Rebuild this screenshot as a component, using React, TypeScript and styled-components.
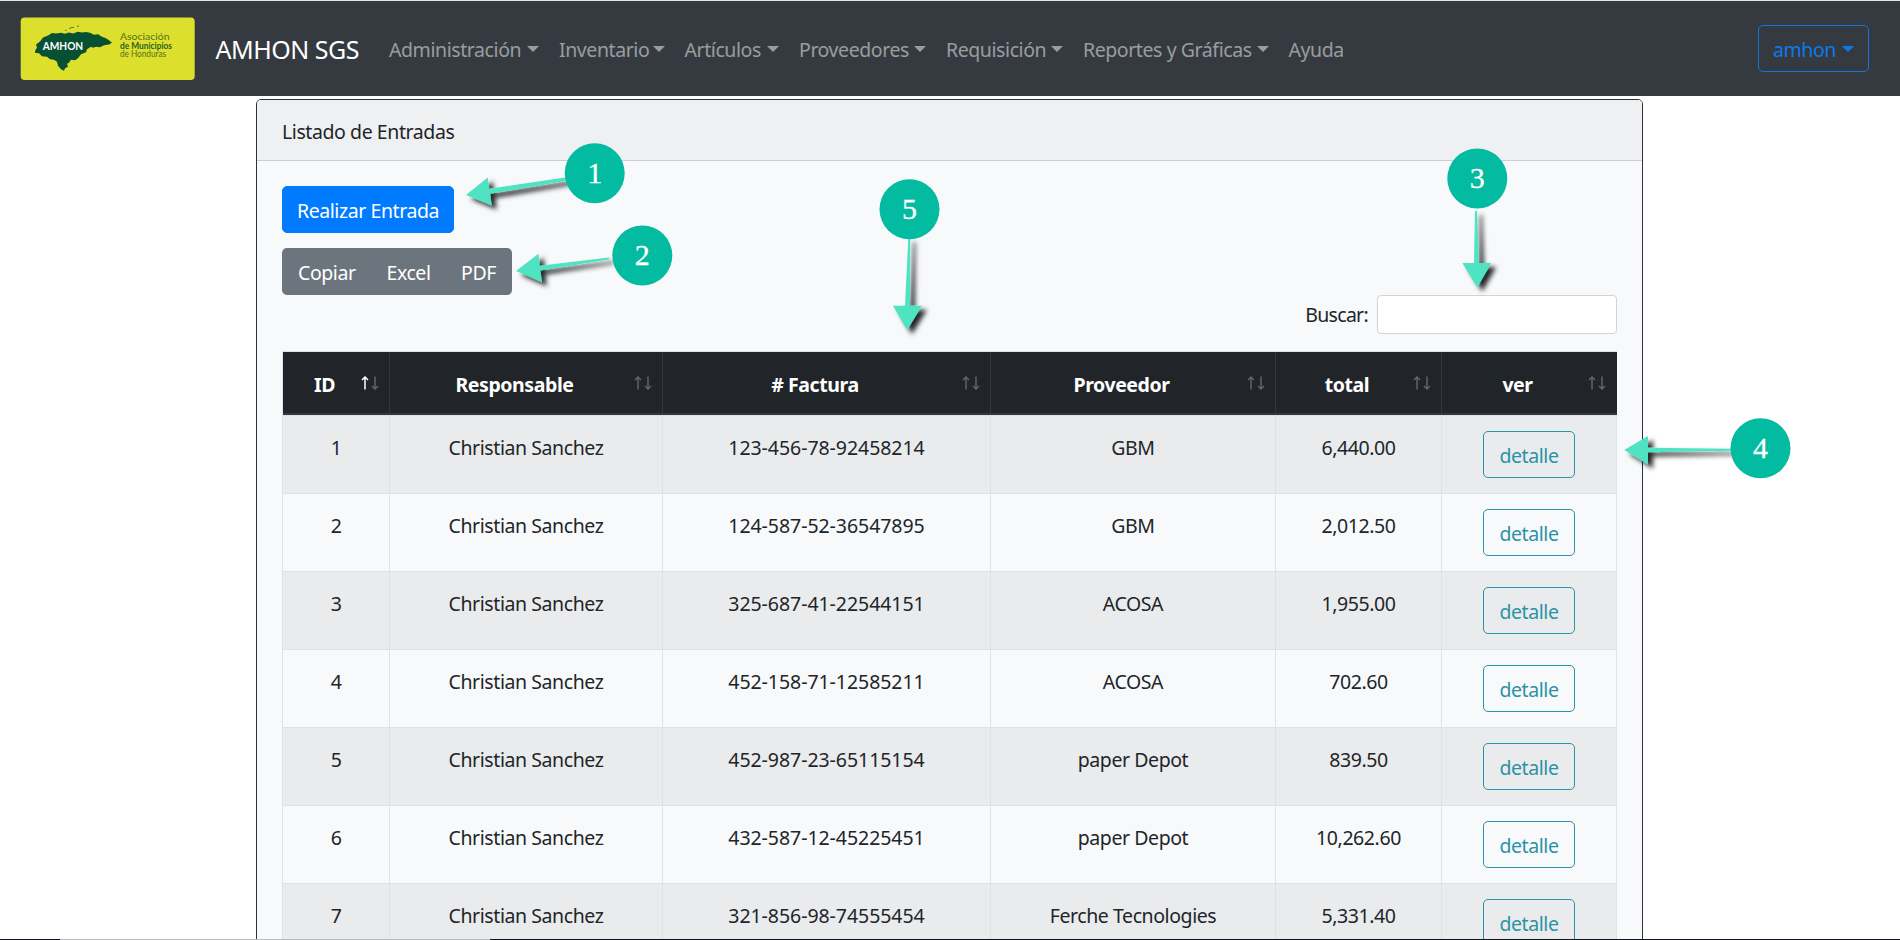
import React from 'react';
import styled, { createGlobalStyle } from 'styled-components';

const GlobalStyle = createGlobalStyle`
  * { box-sizing: border-box; }
  body {
    margin: 0;
    background: #fff;
    color: #212529;
    font-family: "Noto Sans", "Open Sans", sans-serif;
    font-size: 19.5px;
    line-height: 30px;
    letter-spacing: -0.42px;
    overflow: hidden;
  }
`;

const Page = styled.div`
  position: relative;
  display: flex;
  flex-direction: column;
  height: 940px;
  overflow: hidden;
`;

const Navbar = styled.nav`
  flex: none;
  display: flex;
  align-items: center;
  height: 96px;
  padding: 0 31px 0 20px;
  border-top: 1px solid #dfe7e7;
  background: #343a40;
`;

const Brand = styled.a`
  display: flex;
  align-items: center;
  width: 359px;
  color: #fff;
`;

const BrandName = styled.span`
  margin-left: 19.5px;
  padding-top: 1px;
  font-size: 25px;
  line-height: 38px;
  letter-spacing: -0.5px;
  white-space: nowrap;
`;

const NavList = styled.div`
  display: flex;
  flex: 1;
  padding-top: 3px;
`;

const NavItem = styled.a<{ $width: number }>`
  display: flex;
  align-items: center;
  justify-content: space-between;
  width: ${(p) => p.$width}px;
  padding: 0 10px;
  color: rgba(255, 255, 255, 0.5);
  white-space: nowrap;
`;

const Caret = styled.span`
  margin-bottom: 2px;
  border: 6px solid transparent;
  border-top-color: currentColor;
  border-bottom: 0;
`;

const Button = styled.button<{ $tone: 'primary' | 'outlinePrimary' | 'outlineInfo' }>`
  display: inline-flex;
  align-items: center;
  justify-content: center;
  gap: 6px;
  height: 47px;
  padding: 9px 0 6px;
  border: 1px solid;
  border-radius: 5px;
  font: inherit;
  line-height: 30px;
  letter-spacing: inherit;
  white-space: nowrap;
  ${(p) =>
    p.$tone === 'primary'
      ? 'width: 172px; background: #007bff; border-color: #007bff; color: #fff;'
      : p.$tone === 'outlinePrimary'
        ? 'width: 111px; background: transparent; border-color: #1774d8; color: #0f79ec;'
        : 'width: 92px; background: transparent; border-color: #2a93a5; color: #2a93a5;'}
`;

const Card = styled.section`
  flex: none;
  width: 1387px;
  margin: 3px 0 0 256px;
  border: 1px solid #2d3237;
  border-radius: 5px;
  background: #f8f9fb;
`;

const CardHeader = styled.header`
  height: 61px;
  padding: 17px 25px 0;
  border-bottom: 1px solid #ccced1;
  border-radius: 4px 4px 0 0;
  background: #eff0f2;
`;

const CardBody = styled.div`
  display: flex;
  flex-direction: column;
  align-items: flex-start;
  padding: 25px;
`;

const ButtonGroup = styled.div`
  display: flex;
  width: 230px;
  height: 47px;
  margin-top: 15px;
  padding: 10px 0 0 16px;
  border-radius: 5px;
  background: #6c757d;
  color: #fff;
`;

const GroupButton = styled.span<{ $width: number }>`
  width: ${(p) => p.$width}px;
`;

const Search = styled.label`
  display: flex;
  align-self: flex-end;
  align-items: center;
  gap: 9px;
  letter-spacing: -0.7px;
`;

const SearchInput = styled.input`
  width: 240px;
  height: 39px;
  border: 1px solid #ced4da;
  border-radius: 4px;
  background: #fff;
`;

const Table = styled.div`
  width: 1335px;
  margin-top: 17px;
  border-left: 1px solid #dee2e6;
  text-align: center;
`;

const Row = styled.div<{ $striped?: boolean }>`
  display: grid;
  grid-template-columns: 107px 273px 328px 285px 166px 175px;
  height: 78px;
  border-top: 1px solid #dee2e6;
  background: ${(p) => (p.$striped ? '#eaebed' : 'transparent')};
`;

const HeadRow = styled(Row)`
  height: 64px;
  border-bottom: 2px solid #32383e;
  background: #212529;
  color: #fff;
  font-weight: 700;
`;

const Cell = styled.div<{ $spacing?: string }>`
  padding-top: 17px;
  border-right: 1px solid #dee2e6;
  letter-spacing: ${(p) => p.$spacing ?? 'inherit'};
`;

const ActionCell = styled(Cell)`
  padding-top: 15px;
`;

const HeadCell = styled.div`
  position: relative;
  padding: 18px 23px 0 0;
  border-right: 1px solid #32383e;
  &:last-child { border-right-color: #212529; }
`;

const SortIcon = styled.svg`
  position: absolute;
  top: 24px;
  right: 10.5px;
`;

const BottomEdge = styled.div`
  position: absolute;
  left: 0;
  right: 0;
  bottom: 0;
  height: 1px;
  background: linear-gradient(90deg, #10151f 60px, #b9bbbd 60px, #b9bbbd 490px, #10151f 490px);
`;

const Annotations = styled.svg`
  position: absolute;
  inset: 0;
  pointer-events: none;
`;

const menu = [
  { label: 'Administración', width: 170, caret: true },
  { label: 'Inventario', width: 125.5, caret: true },
  { label: 'Artículos', width: 114.5, caret: true },
  { label: 'Proveedores', width: 147, caret: true },
  { label: 'Requisición', width: 137, caret: true },
  { label: 'Reportes y Gráficas', width: 205.5, caret: true },
  { label: 'Ayuda', width: 76, caret: false },
];

const columns = ['ID', 'Responsable', '# Factura', 'Proveedor', 'total', 'ver'];

const entries = [
  ['1', '123-456-78-92458214', 'GBM', '6,440.00'],
  ['2', '124-587-52-36547895', 'GBM', '2,012.50'],
  ['3', '325-687-41-22544151', 'ACOSA', '1,955.00'],
  ['4', '452-158-71-12585211', 'ACOSA', '702.60'],
  ['5', '452-987-23-65115154', 'paper Depot', '839.50'],
  ['6', '432-587-12-45225451', 'paper Depot', '10,262.60'],
  ['7', '321-856-98-74555454', 'Ferche Tecnologies', '5,331.40'],
];

const callouts = [
  { n: 1, x: 594.7, y: 173.3, arrow: '466,195 487.7,177.5 489.2,188.8 565,177.5 565,181 490.2,193.8 491.7,205.5' },
  { n: 2, x: 642.3, y: 255.5, arrow: '516,271 538.5,253.7 539.7,265.8 609,257.5 609,259.5 540.3,270.5 542,282.3' },
  { n: 3, x: 1477.3, y: 178.5, arrow: '1477.3,287.5 1462.3,263 1474,263 1475,211 1477,211 1479,263 1491.3,263' },
  { n: 4, x: 1760.5, y: 448.3, arrow: '1624.2,450 1648,436 1648,447.7 1732,448.7 1732,450.7 1648,452.3 1648,464.5' },
  { n: 5, x: 909.5, y: 209.3, arrow: '907,330.3 893,305.7 905,305.7 908.3,238 910.3,238 910,305.7 922,305.7' },
];

function Logo() {
  return (
    <svg width="176" height="64" viewBox="20 16.5 176 64">
      <rect x="20.7" y="17" width="174" height="62.500" rx="4" fill="#dcdf2b" />
      <path
        fill="#075034"
        d="M35 50.5l2-3.5-1-3 4-3 3-4 5-2 4-2.500 4 .500 5-.700 4 1 4-1.300 4 1 5-1.700 4 .700 4-.500 4 .800 4 2 4-.500 4 2.500 4 1.500 3 2 3 2.500-3 1.800-5 .700-4 2-4-.500-3 1-2-1-4 2.500-1 3-5 2-3 4-3 2-4-.500-2 3-2 1 1 3-3 1.500-1 2.500-3-1.500-3-3.500-1-4-3-2-4-.500-3-2.500-5-.500-3-3-4-.500z"
      />
      <path d="M65 30l1.500-.5M69 28l3-1 2-.2M77 26l2-.5" stroke="#3c5f20" strokeWidth="0.8" fill="none" />
      <g fontFamily="Lato, sans-serif" letterSpacing="0">
        <text x="42.700" y="49.200" fontSize="12" fontWeight="700" fill="#fff" textLength="40.500" lengthAdjust="spacingAndGlyphs">AMHON</text>
        <g fill="#51721f" fontSize="10">
          <text x="120" y="39.300" textLength="49.500" lengthAdjust="spacingAndGlyphs">Asociación</text>
          <text x="120" y="48" fontSize="9.500" fontWeight="700" fill="#2b6026" textLength="52" lengthAdjust="spacingAndGlyphs">de Municipios</text>
          <text x="120" y="56" fontSize="9" textLength="46" lengthAdjust="spacingAndGlyphs">de Honduras</text>
        </g>
      </g>
    </svg>
  );
}

function Sort({ active }: { active: boolean }) {
  return (
    <SortIcon width="18" height="14" viewBox="0 0 18 14" fill="none" strokeWidth="1.5">
      <path d="M4 13.500V1.500M1 4L4 1L7 4" stroke={active ? '#fff' : '#5f6468'} />
      <path d="M14 .500V12.500M11 10L14 13L17 10" stroke="#5f6468" />
    </SortIcon>
  );
}

export default function App() {
  return (
    <Page>
      <GlobalStyle />
      <Navbar>
        <Brand>
          <Logo />
          <BrandName>AMHON SGS</BrandName>
        </Brand>
        <NavList>
          {menu.map((m) => (
            <NavItem key={m.label} $width={m.width}>
              {m.label}
              {m.caret && <Caret />}
            </NavItem>
          ))}
        </NavList>
        <Button $tone="outlinePrimary">
          amhon <Caret />
        </Button>
      </Navbar>
      <Card>
        <CardHeader>Listado de Entradas</CardHeader>
        <CardBody>
          <Button $tone="primary">Realizar Entrada</Button>
          <ButtonGroup>
            <GroupButton $width={88.5}>Copiar</GroupButton>
            <GroupButton $width={74.5}>Excel</GroupButton>
            <GroupButton $width={36}>PDF</GroupButton>
          </ButtonGroup>
          <Search>
            Buscar:
            <SearchInput />
          </Search>
          <Table>
            <HeadRow>
              {columns.map((c, i) => (
                <HeadCell key={c}>
                  {c}
                  <Sort active={i === 0} />
                </HeadCell>
              ))}
            </HeadRow>
            {entries.map(([id, invoice, supplier, total], i) => (
              <Row key={id} $striped={i % 2 === 0}>
                <Cell>{id}</Cell>
                <Cell>Christian Sanchez</Cell>
                <Cell $spacing="-0.05px">{invoice}</Cell>
                <Cell>{supplier}</Cell>
                <Cell>{total}</Cell>
                <ActionCell>
                  <Button $tone="outlineInfo">detalle</Button>
                </ActionCell>
              </Row>
            ))}
          </Table>
        </CardBody>
      </Card>
      <Annotations width="1900" height="940" viewBox="0 0 1900 940">
        <defs>
          <filter id="shade" x="-50%" y="-50%" width="200%" height="220%">
            <feDropShadow dx="5" dy="4" stdDeviation="2.500" floodColor="#000" floodOpacity="0.85" />
          </filter>
        </defs>
        {callouts.map((c) => (
          <g key={c.n}>
            <polygon points={c.arrow} fill="#50e3c2" filter="url(#shade)" />
            <circle cx={c.x} cy={c.y} r="30" fill="#02bba1" />
            <text x={c.x} y={c.y + 9.7} fill="#fff" stroke="#fff" strokeWidth="0.3" fontFamily="Liberation Serif, serif" fontSize="30" letterSpacing="0" textAnchor="middle">
              {c.n}
            </text>
          </g>
        ))}
      </Annotations>
      <BottomEdge />
    </Page>
  );
}
